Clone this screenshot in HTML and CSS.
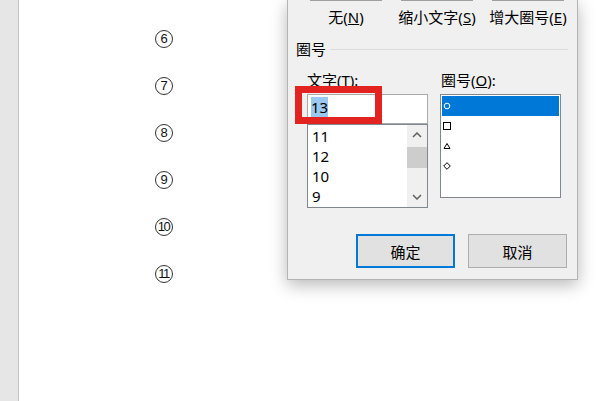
FILE: index.html
```html
<!DOCTYPE html>
<html lang="zh-CN">
<head>
<meta charset="utf-8">
<title>带圈字符</title>
<link rel="stylesheet" href="styles.css">
</head>
<body>
<div class="app">
  <aside class="gutter"></aside>
  <main class="page">
    <div class="nums">
      <div class="num-row"><span class="circ">6</span></div>
      <div class="num-row"><span class="circ">7</span></div>
      <div class="num-row"><span class="circ">8</span></div>
      <div class="num-row"><span class="circ">9</span></div>
      <div class="num-row"><span class="circ two">10</span></div>
      <div class="num-row"><span class="circ two">11</span></div>
    </div>
  </main>
</div>

<div class="dialog">
  <div class="previews">
    <div class="preview"></div>
    <div class="preview"></div>
    <div class="preview"></div>
  </div>
  <div class="preview-labels">
    <span class="plabel">无(<u>N</u>)</span>
    <span class="plabel">缩小文字(<u>S</u>)</span>
    <span class="plabel">增大圈号(<u>E</u>)</span>
  </div>
  <div class="group-head">
    <span class="group-title">圈号</span>
    <span class="rule"></span>
  </div>
  <div class="fields">
    <div class="field">
      <span class="flabel">文字(<u>T</u>):</span>
      <div class="textbox"><span class="sel">13</span></div>
      <div class="listbox">
        <ul class="items">
          <li>11</li>
          <li>12</li>
          <li>10</li>
          <li>9</li>
        </ul>
        <div class="scrollbar">
          <div class="sb-btn">
            <svg width="10" height="6" viewBox="0 0 10 6"><polyline points="1,5 5,1 9,5" fill="none" stroke="#606060" stroke-width="1.5"/></svg>
          </div>
          <div class="sb-thumb"></div>
          <div class="sb-track"></div>
          <div class="sb-btn">
            <svg width="10" height="6" viewBox="0 0 10 6"><polyline points="1,1 5,5 9,1" fill="none" stroke="#606060" stroke-width="1.5"/></svg>
          </div>
        </div>
      </div>
    </div>
    <div class="field">
      <span class="flabel sym-label">圈号(<u>O</u>):</span>
      <ul class="symlist">
        <li class="selected"><svg width="8" height="8" viewBox="0 0 8 8"><circle cx="4" cy="4" r="2.8" fill="none" stroke="currentColor" stroke-width="1"/></svg></li>
        <li><svg width="8" height="8" viewBox="0 0 8 8"><rect x="0.5" y="0.5" width="7" height="7" fill="none" stroke="currentColor" stroke-width="1"/></svg></li>
        <li><svg width="8" height="8" viewBox="0 0 8 8"><polygon points="4,1.5 7,6.5 1,6.5" fill="none" stroke="currentColor" stroke-width="1"/></svg></li>
        <li><svg width="8" height="8" viewBox="0 0 8 8"><polygon points="4,0.7 7.3,4 4,7.3 0.7,4" fill="none" stroke="currentColor" stroke-width="1"/></svg></li>
      </ul>
    </div>
  </div>
  <div class="actions">
    <button class="btn primary">确定</button>
    <button class="btn">取消</button>
  </div>
  <div class="highlight"></div>
</div>
</body>
</html>
```

FILE: styles.css
```css
html, body {
  margin: 0;
  padding: 0;
  background: #ffffff;
}

body {
  width: 601px;
  height: 401px;
  overflow: hidden;
  position: relative;
  font-family: "Noto Sans", "Noto Sans CJK SC", sans-serif;
  font-size: 15px;
  color: #000;
}

.app {
  display: flex;
  height: 401px;
}

.gutter {
  width: 18px;
  background: #e6e6e6;
  border-right: 1px solid #c4c4c4;
}

.page {
  flex: 1;
  background: #fff;
}

.nums {
  display: flex;
  flex-direction: column;
  padding-top: 15px;
  padding-left: 136px;
}

.num-row {
  height: 47px;
  display: flex;
  align-items: center;
}

.circ {
  width: 16px;
  height: 16px;
  border: 1px solid #333;
  border-radius: 50%;
  display: flex;
  align-items: center;
  justify-content: center;
  font-family: "Liberation Sans", sans-serif;
  font-size: 13px;
  line-height: 1;
  color: #111;
}

.circ.two {
  letter-spacing: -1.5px;
  text-indent: -1px;
}

/* Dialog */
.dialog {
  position: absolute;
  left: 287px;
  top: 0;
  width: 291px;
  height: 280px;
  box-sizing: border-box;
  border: 1px solid #b4b4b4;
  border-top: none;
  background: #f0f0f0;
  box-shadow: 0 5px 16px rgba(0, 0, 0, 0.28);
  display: flex;
  flex-direction: column;
}

.previews {
  display: flex;
  gap: 19px;
  padding-left: 22px;
}

.preview {
  width: 72px;
  height: 1px;
  background: #a0a0a0;
}

.preview-labels {
  display: flex;
  gap: 19px;
  padding-left: 22px;
  margin-top: 6px;
}

.plabel {
  width: 72px;
  text-align: center;
  white-space: nowrap;
  line-height: 20px;
  display: flex;
  justify-content: center;
}

.group-head {
  display: flex;
  align-items: center;
  margin-top: 12px;
  padding-left: 8px;
  padding-right: 9px;
  line-height: 20px;
}

.rule {
  flex: 1;
  height: 1px;
  background: #dcdcdc;
  margin-left: 4px;
}

.fields {
  display: grid;
  grid-template-columns: 121px 121px;
  column-gap: 12px;
  padding-left: 19px;
  margin-top: 11px;
  align-items: start;
}

.field {
  display: flex;
  flex-direction: column;
}

.flabel {
  line-height: 20px;
  margin-bottom: 4px;
  white-space: nowrap;
}

.sym-label {
  padding-left: 1px;
}

.textbox {
  height: 30px;
  box-sizing: border-box;
  border: 1px solid #a9a9a9;
  background: #fff;
  padding: 2px 0 0 3px;
  display: flex;
  align-items: flex-start;
}

.sel {
  background: #99c9ef;
  line-height: 20px;
  height: 20px;
  color: #000;
}

.listbox {
  height: 84px;
  box-sizing: border-box;
  border: 1px solid #82878f;
  background: #fff;
  display: flex;
}

.items {
  list-style: none;
  margin: 0;
  padding: 1px 0 0 4px;
  flex: 1;
  overflow: hidden;
}

.items li {
  height: 20px;
  line-height: 20px;
}

.scrollbar {
  width: 20px;
  display: flex;
  flex-direction: column;
  background: #f0f0f0;
}

.sb-btn {
  height: 20px;
  display: flex;
  align-items: center;
  justify-content: center;
}

.sb-thumb {
  margin-top: 2px;
  height: 21px;
  background: #cdcdcd;
}

.sb-track {
  flex: 1;
}

.symlist {
  list-style: none;
  margin: 0;
  height: 104px;
  box-sizing: border-box;
  border: 1px solid #82878f;
  background: #fff;
  padding: 1px;
}

.symlist li {
  height: 20px;
  display: flex;
  align-items: center;
  padding-left: 1px;
  color: #000;
}

.symlist li.selected {
  background: #0078d7;
  color: #fff;
}

.actions {
  display: flex;
  justify-content: flex-end;
  gap: 13px;
  padding-right: 10px;
  margin-top: 26px;
}

.btn {
  width: 99px;
  height: 34px;
  box-sizing: border-box;
  border: 1px solid #adadad;
  background: #e1e1e1;
  font-family: "Noto Sans CJK SC", sans-serif;
  font-size: 15px;
  color: #000;
  padding: 0;
}

.btn.primary {
  border: 2px solid #0078d7;
}

.highlight {
  position: absolute;
  left: 7px;
  top: 86px;
  width: 87px;
  height: 38px;
  box-sizing: border-box;
  border: 7px solid #e3231f;
}
```
